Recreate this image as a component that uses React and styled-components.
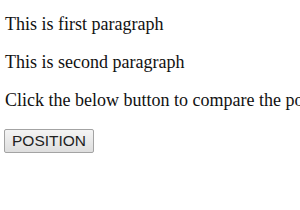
import React from "react";
import styled, { createGlobalStyle } from "styled-components";

const Global = createGlobalStyle`
  html, body { background: #fff; }
  body { margin: 0; padding: 0; overflow: hidden; font-family: "Liberation Serif", "Times New Roman", serif; color: #111; }
`;

const Page = styled.div`
  display: flex;
  flex-direction: column;
  padding: 14px 0 0 5px;
  width: 300px;
  box-sizing: border-box;
  overflow: hidden;
`;

const Para = styled.p`
  margin: 0 0 18px;
  font-size: 18px;
  line-height: 20px;
  white-space: nowrap;
`;

const Button = styled.button`
  align-self: flex-start;
  margin: 1px 0 0 -1px;
  font-family: "Liberation Sans", Arial, sans-serif;
  font-size: 15.5px;
  color: #222;
  padding: 1px 7px;
  height: 24px;
  border: 1px solid #a3a3a3;
  border-radius: 2px;
  background: linear-gradient(#f4f4f4, #dedede);
`;

export default function App() {
  return (
    <>
      <Global />
      <Page>
        <Para>This is first paragraph</Para>
        <Para>This is second paragraph</Para>
        <Para>Click the below button to compare the position of paragraphs</Para>
        <Button>POSITION</Button>
      </Page>
    </>
  );
}
